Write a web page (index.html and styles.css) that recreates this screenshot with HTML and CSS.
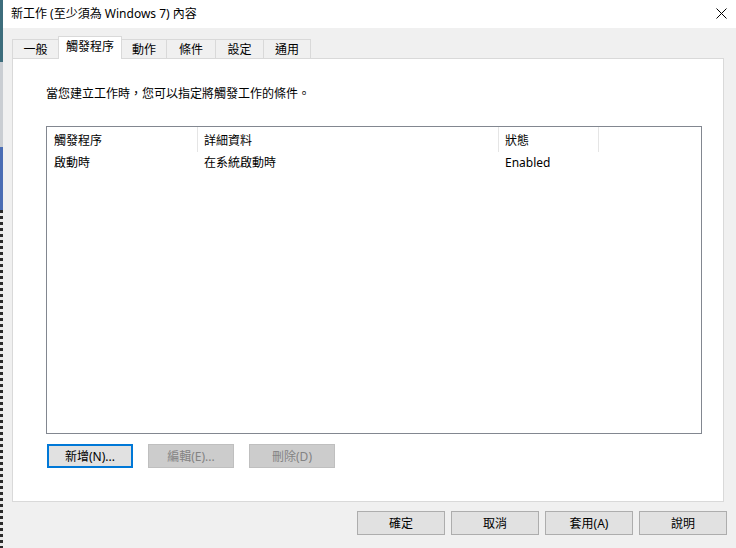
FILE: index.html
```html
<!DOCTYPE html>
<html lang="zh-Hant">
<head>
    <meta charset="UTF-8">
    <title>新工作 (至少須為 Windows 7) 內容</title>
    <link rel="stylesheet" href="styles.css">
</head>
<body>
    <div class="screen">
        <div class="backdrop">
            <div class="bd-teal"></div>
            <div class="bd-gray"></div>
            <div class="bd-blue"></div>
            <div class="bd-icons"></div>
        </div>

        <div class="dialog">
            <div class="titlebar">
                <span class="title">新工作 (至少須為 Windows 7) 內容</span>
                <span class="close">
                    <svg width="11" height="11" viewBox="0 0 11 11">
                        <path d="M0.5 0.5 L10.5 10.5 M10.5 0.5 L0.5 10.5" stroke="#000" stroke-width="1" fill="none"/>
                    </svg>
                </span>
            </div>

            <div class="tabs">
                <div class="tab t-general">一般</div>
                <div class="tab t-triggers active">觸發程序</div>
                <div class="tab t-actions">動作</div>
                <div class="tab t-conditions">條件</div>
                <div class="tab t-settings">設定</div>
                <div class="tab t-common">通用</div>
            </div>

            <div class="panel">
                <p class="intro">當您建立工作時，您可以指定將觸發工作的條件。</p>

                <div class="list">
                    <div class="list-row list-head">
                        <div class="col c1">觸發程序</div>
                        <div class="col c2">詳細資料</div>
                        <div class="col c3">狀態</div>
                    </div>
                    <div class="list-row">
                        <div class="col c1">啟動時</div>
                        <div class="col c2">在系統啟動時</div>
                        <div class="col c3">Enabled</div>
                    </div>
                </div>

                <div class="list-actions">
                    <button class="btn focused">新增(N)...</button>
                    <button class="btn" disabled>編輯(E)...</button>
                    <button class="btn" disabled>刪除(D)</button>
                </div>
            </div>

            <div class="dialog-actions">
                <button class="btn wide">確定</button>
                <button class="btn wide">取消</button>
                <button class="btn wide">套用(A)</button>
                <button class="btn wide">說明</button>
            </div>
        </div>
    </div>
</body>
</html>
```

FILE: styles.css
```css
body {
    margin: 0;
    font-family: "Noto Sans", "Noto Sans CJK TC", sans-serif;
    font-size: 12px;
    color: #000;
}

.screen {
    display: flex;
    height: 548px;
    overflow: hidden;
}

/* sliver of the window behind the dialog */
.backdrop {
    width: 3px;
    display: flex;
    flex-direction: column;
}

.bd-teal {
    height: 62px;
    background-color: #3d6d7c;
}

.bd-gray {
    height: 85px;
    background-color: #c9cdd2;
}

.bd-blue {
    height: 63px;
    background-color: #4a6db4;
}

.bd-icons {
    flex: 1;
    background: repeating-linear-gradient(#2a2a2a 0, #2a2a2a 3px, #e8e8e8 3px, #e8e8e8 6px);
}

.dialog {
    flex: 1;
    display: flex;
    flex-direction: column;
    background-color: #f0f0f0;
}

.titlebar {
    height: 28px;
    display: flex;
    align-items: center;
    justify-content: space-between;
    padding: 0 9px 2px 8px;
    box-sizing: border-box;
    background-color: #fff;
}

.close {
    display: flex;
}

/* tab strip */
.tabs {
    height: 30px;
    display: flex;
    align-items: flex-end;
    margin-left: 9px;
}

.tab {
    height: 19px;
    display: flex;
    align-items: center;
    justify-content: center;
    box-sizing: border-box;
    border: 1px solid #d9d9d9;
    border-bottom: none;
    margin-right: -1px;
    background-color: #f0f0f0;
    padding-bottom: 1px;
}

.tab.active {
    height: 23px;
    margin-bottom: -1px;
    background-color: #fff;
    z-index: 1;
    padding-bottom: 4px;
}

.t-general { width: 47px; }
.t-triggers { width: 64px; }
.t-actions { width: 46px; }
.t-conditions { width: 50px; }
.t-settings { width: 49px; }
.t-common { width: 48px; }

.panel {
    height: 444px;
    margin: 0 12px 0 9px;
    padding: 27px 0 0 33px;
    box-sizing: border-box;
    border: 1px solid #d9d9d9;
    background-color: #fff;
}

.intro {
    margin: 0;
    line-height: 16px;
}

/* trigger list */
.list {
    width: 656px;
    height: 308px;
    margin-top: 24px;
    box-sizing: border-box;
    border: 1px solid #828790;
}

.list-row {
    display: flex;
    height: 20px;
}

.list-head {
    height: 25px;
}

.col {
    display: flex;
    align-items: center;
    box-sizing: border-box;
}

.list-head .col {
    border-right: 1px solid #e5e5e5;
}

.c1 {
    width: 151px;
    padding-left: 7px;
}

.c2 {
    width: 301px;
    padding-left: 6px;
}

.c3 {
    width: 100px;
    padding-left: 6px;
}

/* buttons */
.btn {
    width: 86px;
    height: 24px;
    padding: 0;
    font-family: inherit;
    font-size: 12px;
    color: #000;
    background-color: #e1e1e1;
    border: 1px solid #adadad;
    box-sizing: border-box;
}

.btn.focused {
    border-color: #0078d7;
    box-shadow: inset 0 0 0 1px #0078d7;
}

.btn:disabled {
    color: #838383;
    background-color: #cccccc;
    border-color: #bfbfbf;
}

.list-actions {
    display: flex;
    gap: 15px;
    margin-top: 10px;
    padding-left: 1px;
}

.dialog-actions {
    display: flex;
    justify-content: flex-end;
    gap: 6px;
    margin-top: 9px;
    padding-right: 9px;
}

.btn.wide {
    width: 88px;
}
```
